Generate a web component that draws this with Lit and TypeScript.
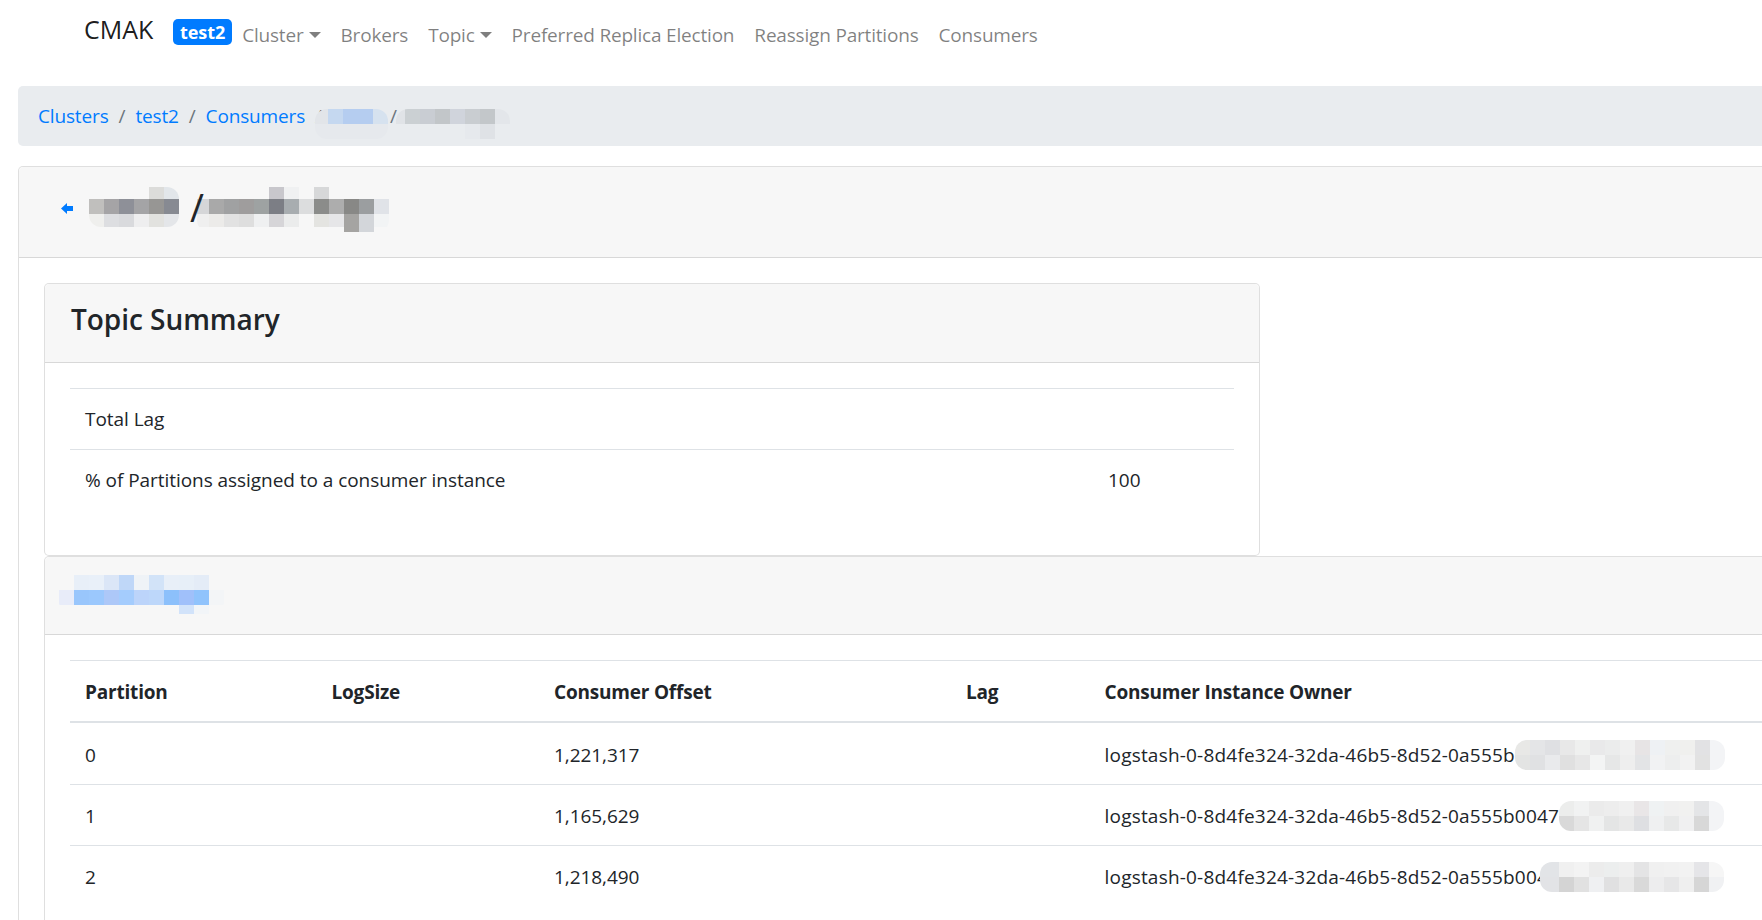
import { LitElement, html, css } from 'lit';
import { customElement } from 'lit/decorators.js';

// blurred parts of the screenshot, drawn as blocks of colour
function mosaic(rows: string[][], cols: string, heights: string, cls = '') {
  return html`<span
    class="mosaic ${cls}"
    style="grid-template-columns:${cols};grid-template-rows:${heights}"
    >${rows.flat().map((c) => html`<i style="background:${c || 'transparent'}"></i>`)}</span
  >`;
}

const crumbA = [
  ['#e2e5e9', '#c5d8f0', '#b5cdf0', '#b5cdf0', '#d6e2ef'],
  ['#e6e9ed', '#e6e9ed', '#e6e9ed', '#e6e9ed', '#e6e9ed'],
];
const crumbB = [
  ['#e0e3e7', '#cbd0d3', '#c9cdd3', '#c2c6c9', '#d0d4dc', '#c9cdd1', '#c3c7ca', '#e3e6ea'],
  ['', '', '', '', '', '#e6e9ed', '#dfe2e6', ''],
];
const titleA = [
  ['', '', '', '', '#dcdcda', '#e2e6ea'],
  ['#c0bfbd', '#a5a4a6', '#8e9098', '#a4a4a6', '#979694', '#878a92'],
  ['#efefed', '#dddee1', '#d9dadd', '#eeeeef', '#e2e2df', '#e4e6e9'],
];
const titleB = [
  ['', '', '', '', '', '#c8c7cc', '#f0f1f2', '', '#d7d8d9', '', '', '', ''],
  ['#d5d6d8', '#a9a9a9', '#a0a1a2', '#9f9d9d', '#9ea2a2', '#7c7e85', '#a8adb0', '#dcddde', '#8b8c8a', '#adadad', '#888886', '#9b9ea0', '#e0e3e8'],
  ['#efefef', '#ecebe9', '#e2e2e2', '#dedede', '#eff0f1', '#d6d5d8', '#ebecec', '#f7f7f7', '#e4e4e1', '#e6e6e8', '#a5a4a2', '#d3d6da', '#f2f4f5'],
  ['', '', '', '', '', '', '', '', '', '', '#a5a4a2', '#d3d6da', ''],
];
const sectionName = [
  ['', '#e8eff8', '#e9f0f9', '#dbe6f7', '#bfd7f8', '#eff3f7', '#d2e3f8', '#e8eff8', '#e7eff8', '#e4ecf7', ''],
  ['#e8ecf9', '#99c6fc', '#9bc8fd', '#adc8f8', '#a4ccfd', '#bcd4fa', '#bdd7fa', '#8cc0fb', '#a0c0fa', '#90c3fc', '#f3f5f7'],
  ['', '', '', '', '', '', '', '', '#d2e3fa', '#f2f5f8', ''],
];

const rows = [
  {
    partition: '0',
    offset: '1,221,317',
    owner: 'logstash-0-8d4fe324-32da-46b5-8d52-0a555b',
    blur: [
      ['#e8e8e6', '#e4e5e7', '#dfe0e3', '#e8e8e8', '#eff0ef', '#e9e9ea', '#ebecec', '#f0f0f0', '#e7e4e5', '#eef1f4', '#eff0ef', '#f0f0ee', '#e2e2e4', '#f3f4f6'],
      ['#e3e4e3', '#e0e1e3', '#e9eaec', '#e0e0e0', '#e7e7e7', '#f3f4f4', '#e6e7e7', '#eeeeee', '#e3e4e6', '#f1f2f3', '#edeeee', '#f2f2f2', '#e2e2e2', '#f3f4f6'],
    ],
    cols: 'repeat(14, 15px)',
    shift: '',
  },
  {
    partition: '1',
    offset: '1,165,629',
    owner: 'logstash-0-8d4fe324-32da-46b5-8d52-0a555b0047',
    blur: [
      ['#ecedec', '#f1f2f2', '#ebebeb', '#ededed', '#f0f0f0', '#e9e6e7', '#eff2f3', '#f0f0f0', '#f1f1f0', '#e4e5e7', '#f3f4f6'],
      ['#d9d9d9', '#e5e5e5', '#f0f1f1', '#e4e5e5', '#e9e9e9', '#dedfe2', '#eff0f1', '#e7e8e8', '#f0f0f1', '#d8d8d8', '#f3f4f6'],
    ],
    cols: 'repeat(11, 15px)',
    shift: '',
  },
  {
    partition: '2',
    offset: '1,218,490',
    owner: 'logstash-0-8d4fe324-32da-46b5-8d52-0a555b004',
    blur: [
      ['#e2e4e7', '#e2e4e7', '#f0f0f0', '#f3f3f3', '#ececec', '#eceeee', '#efefef', '#e4e4e5', '#f0f0f0', '#f1f1f1', '#f2f2f2', '#e5e5e8', '#f6f6f6'],
      ['#e2e3e6', '#e2e3e6', '#d4d4d4', '#e1e1e1', '#eff0f2', '#e0e0e1', '#e9e9e9', '#d9d9d9', '#ededee', '#e6e6e7', '#efefef', '#d6d6d6', '#f0f1f3'],
    ],
    cols: '4px repeat(12, 15px)',
    shift: 'overlap',
  },
];

@customElement('app-root')
export class AppRoot extends LitElement {
  static styles = css`
    :host {
      display: block;
      height: 100vh;
      overflow: hidden;
      font-family: 'Open Sans', 'Liberation Sans', sans-serif;
      font-size: 19px;
      letter-spacing: -0.05px;
      line-height: 30px;
      color: #212529;
      background: #fff;
    }
    a {
      color: inherit;
      text-decoration: none;
    }
    .page {
      width: 1900px;
      padding-left: 18px;
    }

    /* navbar */
    .nav {
      display: flex;
      align-items: flex-start;
      height: 66px;
      margin-bottom: 20px;
      margin-left: -18px;
      padding-left: 84px;
    }
    .brand {
      margin-right: 20px;
      padding-top: 14px;
      font-size: 25px;
      color: rgba(0, 0, 0, 0.9);
    }
    .env {
      margin: 19px 10px 0 0;
      height: 26px;
      width: 59px;
      text-align: center;
      border-radius: 5px;
      background: #007bff;
      color: #fff;
      font-size: 18px;
      font-weight: 700;
      line-height: 26px;
    }
    .link {
      display: flex;
      align-items: center;
      margin-top: 20px;
      padding-right: 20px;
      letter-spacing: -0.19px;
      color: rgba(0, 0, 0, 0.5);
    }
    .caret {
      width: 0;
      height: 0;
      margin-left: 5px;
      border-top: 6px solid rgba(0, 0, 0, 0.5);
      border-left: 6px solid transparent;
      border-right: 6px solid transparent;
    }

    /* breadcrumb */
    .crumbs {
      display: flex;
      align-items: flex-start;
      padding: 15px 20px;
      margin-bottom: 20px;
      border-radius: 5px;
      background: #e9ecef;
      letter-spacing: -0.15px;
      color: #6c757d;
    }
    .crumbs a {
      color: #007bff;
    }
    .sep {
      padding: 0 10px;
    }
    .sep.tight {
      padding: 0 0 0 2px;
    }
    .crumbs .mosaic {
      margin-top: 8px;
      margin-bottom: -8px;
    }
    .crumbs .first {
      margin-left: -17px;
    }
    .crumbs .second {
      margin-left: -1px;
    }

    /* cards */
    .card {
      border: 1px solid rgba(0, 0, 0, 0.125);
      border-radius: 5px;
      background: #fff;
    }
    .card-head {
      display: flex;
      align-items: center;
      height: 78px;
      padding: 0 20px;
      border-bottom: 1px solid rgba(0, 0, 0, 0.125);
      border-radius: 5px 5px 0 0;
      background: #f7f7f7;
    }
    .card-body {
      padding: 25px;
    }
    .outer > .card-head {
      align-items: flex-start;
      height: 70px;
      padding-top: 20px;
      padding-left: 42px;
    }
    .back {
      width: 12px;
      height: 11px;
      margin: 16px 16px 0 0;
      fill: #007bff;
    }
    .slash {
      margin: 0 -7px 0 11px;
      font-size: 38px;
      line-height: 40px;
      position: relative;
    }
    .heading {
      margin: 0;
      font-size: 28px;
      font-weight: 600;
      letter-spacing: -0.04px;
      line-height: 36px;
    }
    .summary {
      width: 1216px;
      box-sizing: border-box;
    }
    .summary .card-head {
      height: 70px;
      padding: 0 20px 8px 26px;
    }
    .summary table {
      width: 1164px;
      margin-bottom: 20px;
    }
    .summary col.value {
      width: 141px;
    }
    .section .card-head {
      padding-left: 14px;
      align-items: flex-start;
      padding-top: 18px;
      height: 59px;
    }

    /* tables */
    table {
      width: 1804px;
      border-collapse: collapse;
      table-layout: fixed;
    }
    th,
    td {
      padding: 15px;
      border-top: 1px solid #dee2e6;
      text-align: left;
      white-space: nowrap;
    }
    th {
      padding: 16px 15px 14px;
      font-weight: 700;
      letter-spacing: -0.2px;
      border-bottom: 2px solid #dee2e6;
    }
    tbody td {
      padding: 16px 15px 14px;
    }
    tbody tr:first-child td {
      padding-top: 17px;
    }
    .summary tbody td,
    .summary tbody tr:first-child td {
      padding: 15px;
    }
    col.c1 {
      width: 246.5px;
    }
    col.c2 {
      width: 222.5px;
    }
    col.c3 {
      width: 412px;
    }
    col.c4 {
      width: 138.5px;
    }
    .owner {
      display: flex;
      align-items: center;
      letter-spacing: 0.2px;
    }
    .overlap {
      margin-left: -8px;
    }

    .mosaic {
      display: inline-grid;
      flex: none;
      overflow: hidden;
      border-radius: 12px;
      vertical-align: top;
    }
    .mosaic i {
      display: block;
    }
  `;

  render() {
    return html`
      <div class="page">
        <nav class="nav">
          <a class="brand">CMAK</a>
          <span class="env">test2</span>
          <a class="link">Cluster<span class="caret"></span></a>
          <a class="link">Brokers</a>
          <a class="link">Topic<span class="caret"></span></a>
          <a class="link">Preferred Replica Election</a>
          <a class="link">Reassign Partitions</a>
          <a class="link">Consumers</a>
        </nav>

        <div class="crumbs">
          <a>Clusters</a><span class="sep">/</span>
          <a>test2</a><span class="sep">/</span>
          <a>Consumers</a><span class="sep">/</span>
          ${mosaic(crumbA, '13px repeat(4, 15px)', '15px 15px', 'first')}
          <span class="sep tight">/</span>
          ${mosaic(crumbB, '9px repeat(7, 15px)', '15px 15px', 'second')}
        </div>

        <div class="card outer">
          <div class="card-head">
            <svg class="back" viewBox="0 0 12 11"><path d="M0 5.5 6 0v3h6v5H6v3z" /></svg>
            ${mosaic(titleA, 'repeat(6, 15px)', '12px 15px 13px')}
            <span class="slash">/</span>
            ${mosaic(titleB, '12px repeat(12, 15px)', '12px 15px 13px 5px')}
          </div>
          <div class="card-body">
            <div class="card summary">
              <div class="card-head"><h4 class="heading">Topic Summary</h4></div>
              <div class="card-body">
                <table>
                  <colgroup><col /><col class="value" /></colgroup>
                  <tr><td>Total Lag</td><td></td></tr>
                  <tr><td>% of Partitions assigned to a consumer instance</td><td>100</td></tr>
                </table>
              </div>
            </div>
            <div class="card section">
              <div class="card-head">
                ${mosaic(sectionName, 'repeat(11, 15px)', '15px 15px 9px')}
              </div>
              <div class="card-body">
                <table>
                  <colgroup>
                    <col class="c1" /><col class="c2" /><col class="c3" /><col class="c4" /><col />
                  </colgroup>
                  <thead>
                    <tr>
                      <th>Partition</th>
                      <th>LogSize</th>
                      <th>Consumer Offset</th>
                      <th>Lag</th>
                      <th>Consumer Instance Owner</th>
                    </tr>
                  </thead>
                  <tbody>
                    ${rows.map(
                      (r) => html`<tr>
                        <td>${r.partition}</td>
                        <td></td>
                        <td>${r.offset}</td>
                        <td></td>
                        <td>
                          <div class="owner">
                            ${r.owner}${mosaic(r.blur, r.cols, '15px 15px', r.shift)}
                          </div>
                        </td>
                      </tr>`
                    )}
                  </tbody>
                </table>
              </div>
            </div>
          </div>
        </div>
      </div>
    `;
  }
}
